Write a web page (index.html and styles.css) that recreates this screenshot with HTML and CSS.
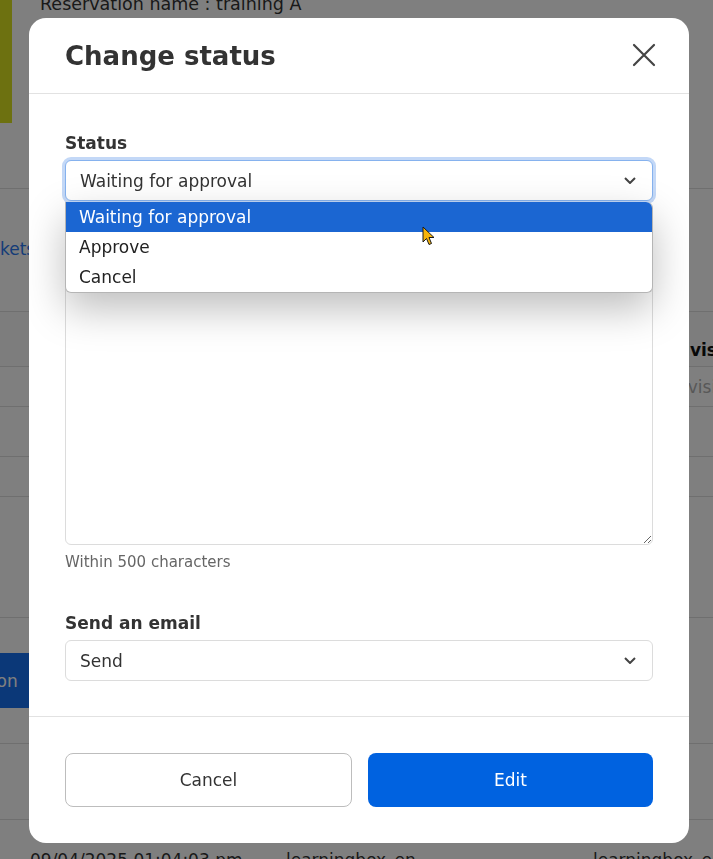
FILE: index.html
```html
<!DOCTYPE html>
<html lang="en">
<head>
<meta charset="utf-8">
<title>Change status</title>
<link rel="stylesheet" href="styles.css">
</head>
<body>
<div class="page">
  <header class="topbar">
    <div class="brand-stripe"></div>
    <div class="res-name">Reservation name : training A</div>
  </header>
  <div class="subbar"></div>
  <nav class="tabs"><a class="tab">Tickets</a></nav>
  <div class="table-a">
    <div class="row row-head"><span class="cell"></span><span class="cell"></span><span class="cell cell-bold">Division</span></div>
    <div class="row row-1"><span class="cell"></span><span class="cell"></span><span class="cell cell-muted">Division</span></div>
    <div class="row row-2"></div>
    <div class="row row-3"></div>
    <div class="row row-4"></div>
  </div>
  <div class="actions"><span class="btn-add">Add reservation</span></div>
  <div class="table-b">
    <div class="row-b row-b1"></div>
    <div class="row-b row-b2"><span>09/04/2025 01:04:03 pm</span><span>learningbox_en</span><span>learningbox_en</span></div>
  </div>
</div>

<div class="backdrop">
  <div class="modal">
    <div class="modal-header">
      <h2 class="modal-title">Change status</h2>
      <span class="close">
        <svg width="24" height="24" viewBox="0 0 24 24"><path d="M2 2 L22 22 M22 2 L2 22" stroke="#444" stroke-width="2.2" fill="none" stroke-linecap="round"/></svg>
      </span>
    </div>
    <div class="modal-body">
      <div class="field">
        <div class="field-label">Status</div>
        <div class="select-wrap">
          <div class="select is-focused">
            <span>Waiting for approval</span>
            <svg class="chev" width="12" height="7" viewBox="0 0 12 7"><path d="M1 1 L6 6 L11 1" stroke="#444" stroke-width="2" fill="none"/></svg>
          </div>
          <div class="dropdown">
            <div class="option is-active">Waiting for approval</div>
            <div class="option">Approve</div>
            <div class="option">Cancel</div>
            <svg class="cursor" width="14" height="20" viewBox="0 0 14 20"><path d="M1 1 L1 16 L4.5 12.5 L7 18.5 L9.5 17.5 L7 11.5 L12 11.5 Z" fill="#f6b40a" stroke="#1a1a1a" stroke-width="1" stroke-linejoin="miter"/></svg>
          </div>
        </div>
      </div>
      <div class="field field-comment">
        <textarea class="textarea" aria-label="Comment"></textarea>
        <div class="help">Within 500 characters</div>
      </div>
      <div class="field field-gap2">
        <div class="field-label">Send an email</div>
        <div class="select">
          <span>Send</span>
          <svg class="chev" width="12" height="7" viewBox="0 0 12 7"><path d="M1 1 L6 6 L11 1" stroke="#444" stroke-width="2" fill="none"/></svg>
        </div>
      </div>
    </div>
    <div class="modal-footer">
      <button class="btn btn-cancel">Cancel</button>
      <button class="btn btn-edit">Edit</button>
    </div>
  </div>
</div>
</body>
</html>
```
FILE: styles.css
```css
* { box-sizing: border-box; }

body {
  margin: 0;
  font-family: "DejaVu Sans", Verdana, sans-serif;
  color: #333;
  background: #fff;
  overflow: hidden;
}

/* ---------- background page ---------- */
.page {
  width: 713px;
  height: 859px;
  overflow: hidden;
}

.topbar {
  display: flex;
  height: 123px;
}
.brand-stripe {
  width: 12px;
  background: #dae220;
}
.res-name {
  margin: -6px 0 0 28px;
  font-size: 17.5px;
  line-height: 20px;
  color: #333;
}

.subbar {
  height: 66px;
  border-bottom: 1px solid #dedede;
}

.tabs {
  height: 123px;
  padding-top: 50px;
  border-bottom: 1px solid #dedede;
  font-size: 17px;
  line-height: 20px;
}
.tab {
  display: inline-block;
  margin-left: -24px;
  color: #2a78f0;
}

.row {
  display: grid;
  grid-template-columns: 286px 384px 1fr;
  border-bottom: 1px solid #dedede;
  font-size: 17px;
  line-height: 20px;
}
.row-head { height: 55px; padding-top: 28px; background: #fafafa; }
.row-1 { height: 40px; padding-top: 10px; }
.row-2 { height: 50px; }
.row-3 { height: 40px; }
.row-4 { height: 121px; }
.cell-bold { font-weight: 700; color: #111; }
.cell-muted { color: #b0b0b0; }

.actions {
  height: 125px;
  padding-top: 35px;
}
.btn-add {
  display: inline-flex;
  align-items: center;
  height: 55px;
  margin-left: -135px;
  padding: 0 18px;
  background: #1670f0;
  color: #fff;
  border-radius: 6px;
  font-size: 17px;
}

.table-b {
  border-top: 1px solid #dedede;
}
.row-b {
  display: grid;
  grid-template-columns: 256px 307px 1fr;
  padding-left: 30px;
  font-size: 17px;
  line-height: 20px;
  color: #333;
  white-space: nowrap;
}
.row-b1 { height: 76px; border-bottom: 1px solid #dedede; }
.row-b2 { padding-top: 30px; }

/* ---------- modal ---------- */
.backdrop {
  position: fixed;
  inset: 0;
  background: rgba(0, 0, 0, 0.5);
  padding: 18px 0 0 29px;
}

.modal {
  width: 660px;
  background: #fff;
  border-radius: 17px;
}

.modal-header {
  height: 76px;
  display: flex;
  align-items: center;
  justify-content: space-between;
  padding: 0 33px 0 36px;
  border-bottom: 1px solid #e2e2e2;
}
.modal-title {
  margin: 0;
  font-size: 26px;
  font-weight: 700;
  color: #333;
}
.close {
  display: flex;
  margin-top: -2px;
}

.modal-body {
  padding: 39px 36px 35px;
}

.field-label {
  font-size: 17px;
  line-height: 20px;
  font-weight: 700;
  color: #333;
  margin-bottom: 7px;
}
.field-comment { margin-top: 67px; }
.field-gap2 { margin-top: 41px; }

.select-wrap { position: relative; }

.select {
  height: 41px;
  display: flex;
  align-items: center;
  justify-content: space-between;
  padding: 0 16px 0 14px;
  border: 1px solid #dcdcdc;
  border-radius: 6px;
  background: #fff;
  font-size: 17px;
  color: #333;
}
.select.is-focused {
  border-color: #86b2ee;
  box-shadow: 0 0 0 3px #c3d8f7;
}

.dropdown {
  position: absolute;
  top: calc(100% + 1px);
  left: 0;
  right: 0;
  z-index: 2;
  background: #fff;
  border: 1px solid #b5b5b5;
  border-top: none;
  border-radius: 0 6px 6px 6px;
  box-shadow: 0 16px 40px rgba(0, 0, 0, 0.26);
}
.option {
  height: 30px;
  display: flex;
  align-items: center;
  padding-left: 13px;
  font-size: 17px;
  color: #222;
}
.option.is-active {
  background: #1b66d2;
  color: #fff;
  border-top-right-radius: 6px;
}
.cursor {
  position: absolute;
  left: 356px;
  top: 24px;
}

.textarea {
  display: block;
  width: 100%;
  height: 277px;
  border: 1px solid #dcdcdc;
  border-radius: 6px;
  background: #fff;
  font-family: inherit;
  font-size: 17px;
}

.help {
  margin-top: 7px;
  font-size: 15px;
  line-height: 20px;
  color: #666;
}

.modal-footer {
  display: flex;
  gap: 16px;
  padding: 36px 36px 36px;
  border-top: 1px solid #e2e2e2;
}
.btn {
  flex: 1;
  height: 54px;
  border-radius: 8px;
  font-family: inherit;
  font-size: 17px;
}
.btn-cancel {
  background: #fff;
  border: 1px solid #bdbdbd;
  color: #333;
}
.btn-edit {
  background: #0062e0;
  border: none;
  color: #fff;
}
```
